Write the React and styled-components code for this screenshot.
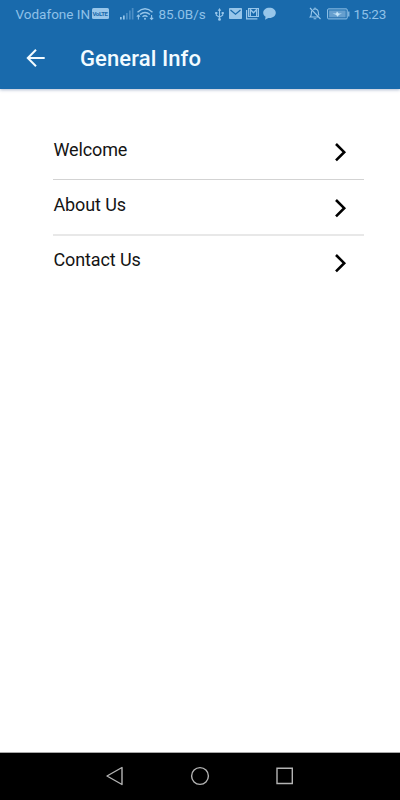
import { createGlobalStyle, styled } from "styled-components";

const GlobalStyle = createGlobalStyle`
  * {
    box-sizing: border-box;
  }

  body {
    margin: 0;
    background: #ffffff;
    font-family: Roboto, "Liberation Sans", sans-serif;
  }
`;

//Styled Components
const Screen = styled.div`
  display: flex;
  flex-direction: column;
  width: 400px;
  height: 800px;
  overflow: hidden;
  background: #ffffff;
`;

const Header = styled.header`
  flex: none;
  height: 89px;
  background: #196aac;
  box-shadow: 0 1px 3px #3c5a8c66;
`;

const StatusBar = styled.div`
  display: flex;
  align-items: center;
  height: 28px;
  padding-left: 15.5px;
  color: #8fc1e8;
`;

const StatusText = styled.span`
  flex: none;
  width: ${(props) => props.$width}px;
  margin-left: ${(props) => props.$gap || 0}px;
  padding-bottom: 1px;
  font-size: 13.5px;
  line-height: 26px;
  letter-spacing: ${(props) => props.$spacing || 0}px;
  white-space: nowrap;
`;

const VolteBadge = styled.span`
  display: flex;
  flex: none;
  justify-content: center;
  align-items: center;
  width: 17px;
  height: 11px;
  margin: 0 0 1px 2px;
  border-radius: 1.5px;
  background: #97c6ea;
  color: #196aac;
  font-size: 6px;
  font-weight: bold;
  line-height: 11px;
  letter-spacing: -0.35px;
`;

const StatusIcon = styled.svg`
  display: block;
  flex: none;
  margin-left: ${(props) => props.$gap}px;
`;

const TitleBar = styled.div`
  display: flex;
  align-items: center;
  height: 61px;
  padding: 0 0 1px 26px;
`;

const BackButton = styled.button`
  display: flex;
  width: 54px;
  padding: 0;
  border: none;
  background: none;
  cursor: pointer;
`;

const Title = styled.h1`
  margin: 0;
  padding-top: 1px;
  color: #f2fbff;
  font-size: 22px;
  font-weight: 500;
  line-height: 28px;
  letter-spacing: 0.1px;
`;

const Menu = styled.ul`
  flex: 1;
  margin: 0;
  padding: 35px 36px 0 53px;
  list-style: none;
`;

const MenuItem = styled.li`
  display: flex;
  justify-content: space-between;
  align-items: center;
  height: 56px;
  padding: 1px 17px 0 0.5px;
  border-bottom: 1px solid #d3d3d3;
  cursor: pointer;

  &:nth-child(2) {
    height: 56px;
    border-bottom: 2px solid #e8e8e8;
  }

  &:last-child {
    height: 52px;
    border-bottom: none;
  }
`;

const MenuLabel = styled.span`
  padding-bottom: 5px;
  color: #141414;
  font-size: 18px;
  line-height: 24px;
  letter-spacing: -0.12px;
`;

const NavBar = styled.nav`
  display: flex;
  flex: none;
  justify-content: center;
  align-items: center;
  gap: 65px;
  height: 48px;
  padding-bottom: 1px;
  border-top: 1px solid #a8a8a8;
  background: #000000;
`;

const SignalIcon = () => (
  <StatusIcon $gap={11} width="14" height="14" viewBox="0 0 14 14" fill="#97c6ea">
    <path d="M0 10h1.7v2.5H0zM3 8.5h1.7v4H3z" />
    <path d="M6 6h1.7v6.5H6zM9 3.5h1.7v9H9zM11.8 1h1.7v11.5h-1.7z" opacity=".4" />
  </StatusIcon>
);

const WifiIcon = () => (
  <StatusIcon
    $gap={2}
    width="18"
    height="14"
    viewBox="0 0 18 14"
    fill="none"
    stroke="#97c6ea"
    strokeWidth="1.4"
  >
    <path d="M1.5 5.2Q9-1.8 16.5 5.2M4 7.5q5-4.2 10 0M6.5 9.8q2.5-2 5 0" />
    <circle cx="9" cy="11.8" r="1" fill="#97c6ea" stroke="none" />
    <path d="M.8 9.6 2.4 8 4 9.6M2.4 8v4.4M14 10.8l1.6 1.6 1.6-1.6M15.6 8v4.4" strokeWidth="1.1" />
  </StatusIcon>
);

const UsbIcon = () => (
  <StatusIcon
    $gap={10}
    width="9"
    height="13"
    viewBox="0 0 9 13"
    fill="none"
    stroke="#97c6ea"
    strokeWidth="1.1"
  >
    <path d="M4.5 2v9M1.3 5v2.2l3.2 2M7.7 5v2.2l-3.2 2" />
    <path d="M4.5 0l1.8 2.7H2.7zM.2 4h2.2v2H.2zM6.6 4h2.2v2H6.6z" fill="#97c6ea" stroke="none" />
    <circle cx="4.5" cy="11.4" r="1.4" fill="#97c6ea" stroke="none" />
  </StatusIcon>
);

const MailIcon = () => (
  <StatusIcon $gap={5} width="13" height="12" viewBox="0 0 13 12">
    <rect width="13" height="11" rx=".8" fill="#97c6ea" />
    <path d="M1.5 2l5 4.2 5-4.2" fill="none" stroke="#196aac" strokeWidth="1.2" />
  </StatusIcon>
);

const GmailIcon = () => (
  <StatusIcon
    $gap={4}
    width="13"
    height="12"
    viewBox="0 0 13 12"
    fill="none"
    stroke="#97c6ea"
  >
    <path d="M.6 2v8.9h10.8" strokeWidth="1.2" />
    <rect x="2.5" y=".5" width="10" height="8" strokeWidth="1" />
    <path d="M4.3 8.5v-7l3.2 3.3 3.2-3.3v7" strokeWidth="1.4" />
  </StatusIcon>
);

const ChatIcon = () => (
  <StatusIcon $gap={4} width="13" height="14" viewBox="0 0 13 14" fill="#97c6ea">
    <path d="M6.5.8C2.9.8.2 2.9.2 5.8c0 1.7.9 3 2.4 3.9L2 12.8l3.3-1.8c4.4.5 7.5-2 7.5-5.2 0-2.9-2.7-5-6.3-5z" />
  </StatusIcon>
);

const BellOffIcon = () => (
  <StatusIcon
    $gap={33}
    width="12"
    height="14"
    viewBox="0 0 12 14"
    fill="none"
    stroke="#97c6ea"
    strokeWidth="1.1"
  >
    <path d="M1 1l10.5 11M2.7 3.8C2 6 3 8.3 1.2 10h8.2M4.2 2.5C6.4.9 9.2 2.5 9.3 5c0 1.4.2 2.6.7 3.5M6 .6V2M4.6 11.7h2.7" />
  </StatusIcon>
);

const BatteryIcon = () => (
  <StatusIcon $gap={6} width="23" height="12" viewBox="0 0 23 12">
    <rect x=".6" y=".9" width="19.6" height="10" rx="1" fill="none" stroke="#97c6ea" />
    <rect x="2.1" y="2.4" width="16.6" height="7" fill="#669fce" />
    <path d="M21.2 3.5h1.2v5h-1.2z" fill="#97c6ea" />
    <path d="M5.5 5.5H9l1-2.1 1.8 2.1H15l-3 1.3-1.4 2L9 6.7z" fill="#c6e6fa" />
  </StatusIcon>
);

const BackIcon = () => (
  <svg
    width="20"
    height="20"
    viewBox="0 0 20 20"
    fill="none"
    stroke="#f2fbff"
    strokeWidth="2"
  >
    <path d="M18.7 10H2.2M10 1.8L1.8 10l8.2 8.2" />
  </svg>
);

const ChevronIcon = () => (
  <svg
    width="13"
    height="20"
    viewBox="0 0 13 20"
    fill="none"
    stroke="#000000"
    strokeWidth="2.6"
  >
    <path d="M2 2l8.2 8.2L2 18.4" />
  </svg>
);

const menuItems = ["Welcome", "About Us", "Contact Us"];

const App = () => {
  return (
    <Screen>
      <GlobalStyle />
      <Header>
        <StatusBar>
          <StatusText $width={74}>Vodafone IN</StatusText>
          <VolteBadge>VoLTE</VolteBadge>
          <SignalIcon />
          <WifiIcon />
          <StatusText $width={46} $gap={5}>
            85.0B/s
          </StatusText>
          <UsbIcon />
          <MailIcon />
          <GmailIcon />
          <ChatIcon />
          <BellOffIcon />
          <BatteryIcon />
          <StatusText $width={33} $gap={4} $spacing={-0.2}>
            15:23
          </StatusText>
        </StatusBar>
        <TitleBar>
          <BackButton aria-label="Back">
            <BackIcon />
          </BackButton>
          <Title>General Info</Title>
        </TitleBar>
      </Header>

      <Menu>
        {menuItems.map((item) => (
          <MenuItem key={item}>
            <MenuLabel>{item}</MenuLabel>
            <ChevronIcon />
          </MenuItem>
        ))}
      </Menu>

      <NavBar>
        <svg width="20" height="20" viewBox="0 0 20 20" fill="none" stroke="#b4b4b4" strokeWidth="1.4">
          <path d="M17 1.5v17L2 10z" strokeLinejoin="round" />
        </svg>
        <svg width="20" height="20" viewBox="0 0 20 20" fill="none" stroke="#b4b4b4" strokeWidth="1.4">
          <circle cx="10" cy="10" r="8.4" />
        </svg>
        <svg width="20" height="20" viewBox="0 0 20 20" fill="none" stroke="#b4b4b4" strokeWidth="1.4">
          <path d="M2 2.2h15.3v15.3H2z" />
        </svg>
      </NavBar>
    </Screen>
  );
};

export default App;
